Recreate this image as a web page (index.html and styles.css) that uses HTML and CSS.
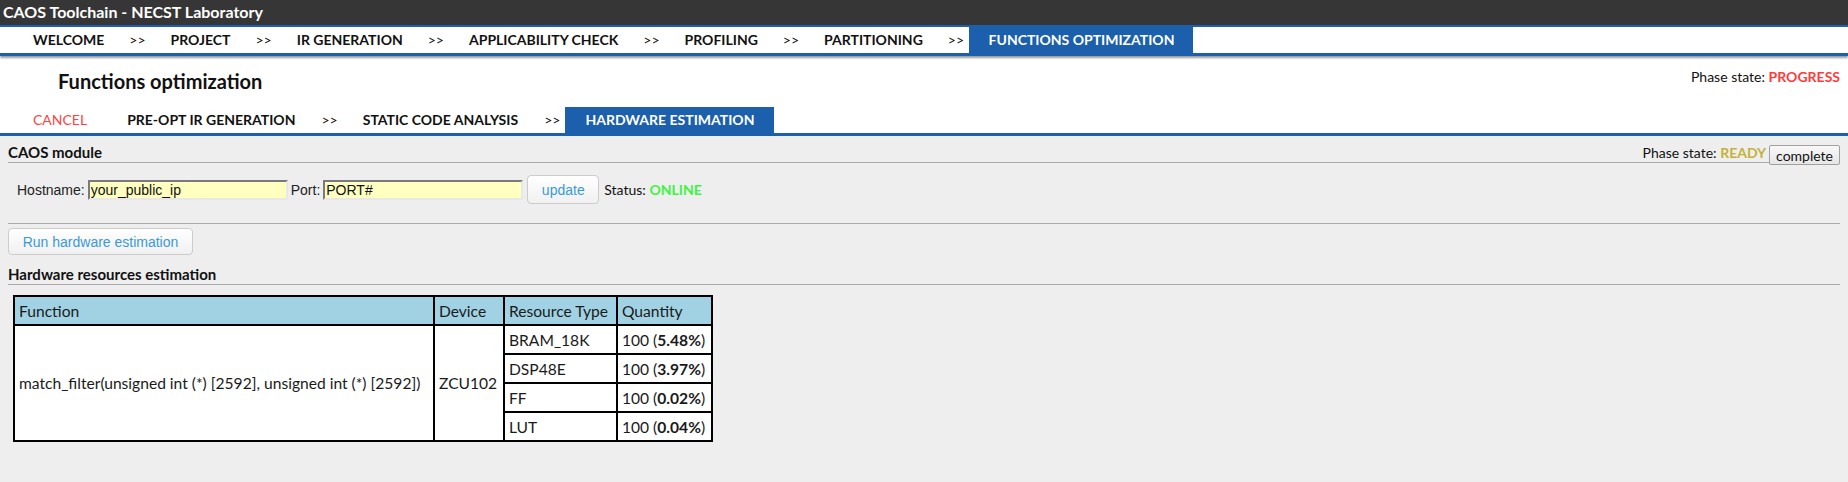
FILE: index.html
```html
<!DOCTYPE html>
<html>
<head>
<meta charset="utf-8">
<title>CAOS Toolchain</title>
<link rel="stylesheet" href="styles.css">
</head>
<body>
<header class="titlebar">CAOS Toolchain - NECST Laboratory</header>
<nav class="mainnav">
  <span class="tab">WELCOME</span><span class="sep">&gt;&gt;</span>
  <span class="tab">PROJECT</span><span class="sep">&gt;&gt;</span>
  <span class="tab">IR GENERATION</span><span class="sep">&gt;&gt;</span>
  <span class="tab">APPLICABILITY CHECK</span><span class="sep">&gt;&gt;</span>
  <span class="tab">PROFILING</span><span class="sep">&gt;&gt;</span>
  <span class="tab">PARTITIONING</span><span class="sep">&gt;&gt;</span>
  <span class="tab active">FUNCTIONS OPTIMIZATION</span>
</nav>
<div class="phasehead">
  <h1 class="pagetitle">Functions optimization</h1>
  <div class="phasestate">Phase state: <b class="progress">PROGRESS</b></div>
</div>
<nav class="subnav">
  <span class="tab cancel">CANCEL</span>
  <span class="tab">PRE-OPT IR GENERATION</span><span class="sep">&gt;&gt;</span>
  <span class="tab">STATIC CODE ANALYSIS</span><span class="sep">&gt;&gt;</span>
  <span class="tab active">HARDWARE ESTIMATION</span>
</nav>
<main class="content">
  <div class="sechead">
    <span class="sectitle">CAOS module</span>
    <span class="secright">Phase state: <b class="ready">READY</b><button class="complete">complete</button></span>
  </div>
  <div class="formrow">
    <label class="lbl">Hostname:</label><input class="field" type="text" value="your_public_ip">
    <label class="lbl">Port:</label><input class="field" type="text" value="PORT#">
    <button class="btn update">update</button>
    <span class="status">Status: <b class="online">ONLINE</b></span>
  </div>
  <div class="runrow"><button class="btn run">Run hardware estimation</button></div>
  <div class="sechead">
    <span class="sectitle">Hardware resources estimation</span>
  </div>
  <table class="restable">
    <thead>
      <tr><th class="cfun">Function</th><th class="cdev">Device</th><th class="ctype">Resource Type</th><th class="cqty">Quantity</th></tr>
    </thead>
    <tbody>
      <tr><td rowspan="4">match_filter(unsigned int (*) [2592], unsigned int (*) [2592])</td><td rowspan="4">ZCU102</td><td>BRAM_18K</td><td>100 (<b>5.48%</b>)</td></tr>
      <tr><td>DSP48E</td><td>100 (<b>3.97%</b>)</td></tr>
      <tr><td>FF</td><td>100 (<b>0.02%</b>)</td></tr>
      <tr><td>LUT</td><td>100 (<b>0.04%</b>)</td></tr>
    </tbody>
  </table>
</main>
</body>
</html>
```
FILE: styles.css
```css
html, body {
  margin: 0;
  padding: 0;
}
body {
  background: #eeeeee;
  font-family: Lato, "Liberation Sans", sans-serif;
  color: #111;
  min-height: 482px;
}
.titlebar {
  background: #363636;
  color: #fff;
  font-weight: bold;
  font-size: 16px;
  height: 25px;
  line-height: 24px;
  padding-left: 3px;
}
.mainnav {
  display: flex;
  background: #fff;
  border-top: 2px solid #1c5fac;
  border-bottom: 3px solid #1c5fac;
  height: 26px;
  padding-left: 13px;
  box-shadow: 0 2px 2px #9a9a9a;
  position: relative;
  z-index: 1;
}
.tab {
  font-weight: bold;
  font-size: 14px;
  line-height: 26px;
  padding: 0 20px;
  color: #111;
  white-space: nowrap;
}
.mainnav .sep {
  padding: 0 5px 0 5px;
}
.tab.active {
  background: #1c5fac;
  color: #fff;
}
.mainnav .tab.active {
  padding: 0 19px 0 19.5px;
}
.sep {
  font-size: 14px;
  line-height: 26px;
  padding: 0 6px;
  color: #111;
}
.subnav .sep {
  padding: 0 5px 0 6px;
}
.phasehead {
  display: flex;
  justify-content: space-between;
  align-items: flex-start;
  background: #fff;
  height: 38px;
  padding: 12px 8px 1px 58px;
}
.pagetitle {
  margin: 0;
  font-size: 20px;
  font-weight: bold;
  line-height: 26px;
}
.phasestate {
  font-size: 14px;
  line-height: 18px;
}
.progress {
  color: #ff3b3b;
}
.subnav {
  display: flex;
  background: #fff;
  height: 26px;
  padding-left: 13px;
  border-bottom: 3px solid #1c5fac;
}
.tab.cancel {
  color: #ff4444;
  font-weight: normal;
}
.content {
  padding: 7px 8px 0 8px;
}
.sechead {
  display: flex;
  justify-content: space-between;
  align-items: flex-start;
  height: 19px;
  border-bottom: 1px solid #aaaaaa;
}
.sectitle {
  font-weight: bold;
  font-size: 15px;
  line-height: 19px;
}
.secright {
  display: flex;
  align-items: flex-start;
  font-size: 14px;
  line-height: 18px;
  padding-top: 1px;
  white-space: pre;
}
.ready {
  color: #c2b23a;
}
.complete {
  margin-left: 3px;
  margin-top: 1px;
  height: 20px;
  padding: 0 6px;
  font-family: Lato, sans-serif;
  font-size: 14px;
  color: #111;
  background: linear-gradient(#f8f8f8, #e6e6e6);
  border: 1px solid #a0a0a0;
  border-radius: 2px;
  position: relative;
}
.formrow {
  display: flex;
  align-items: center;
  gap: 3px;
  padding: 12px 0 19px 9px;
  border-bottom: 1px solid #aaaaaa;
}
.lbl {
  font-family: "Liberation Sans", Arial, sans-serif;
  font-size: 14px;
  color: #222;
}
.field {
  box-sizing: border-box;
  width: 200px;
  height: 20px;
  margin: 0;
  padding: 1px 1px;
  background: #ffffc0;
  border: 2px solid;
  border-color: #7a7a7a #e8e8e8 #e8e8e8 #7a7a7a;
  font-family: "Liberation Sans", Arial, sans-serif;
  font-size: 14px;
  color: #111;
}
.btn {
  font-family: "Liberation Sans", Arial, sans-serif;
  font-size: 14px;
  color: #3a9ad6;
  background: linear-gradient(#ffffff, #f0f0f0);
  border: 1px solid #cccccc;
  border-radius: 4px;
}
.update {
  height: 29px;
  width: 72px;
  padding: 0;
  margin-left: 1px;
}
.status {
  font-size: 14px;
  margin-left: 2px;
}
.online {
  color: #3ef43e;
}
.runrow {
  padding: 4px 0 10px 0;
}
.run {
  height: 27px;
  width: 185px;
  padding: 0;
  display: block;
}
.restable {
  border-collapse: collapse;
  margin: 10px 0 0 5px;
  border: 2px solid #000;
  font-size: 15.6px;
  color: #1a1a1a;
  background: #fff;
}
.restable th, .restable td {
  box-sizing: border-box;
  border: 2px solid #000;
  padding: 0 4px 0 4px;
  height: 29px;
  text-align: left;
  font-weight: normal;
  white-space: nowrap;
}
.restable th {
  background: #a1d2e4;
}
.cfun { width: 420px; }
.cdev { width: 70px; }
.ctype { width: 113px; }
.cqty { width: 95px; }
.restable td b {
  font-weight: bold;
}
```
